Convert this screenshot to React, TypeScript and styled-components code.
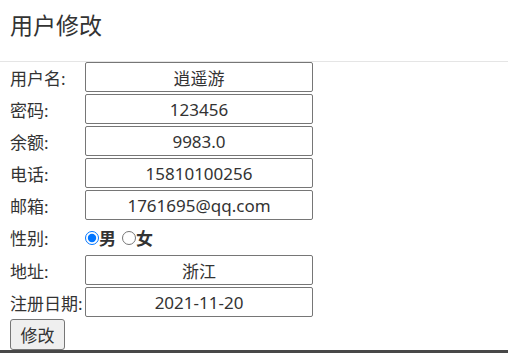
import React from "react";
import styled, { createGlobalStyle } from "styled-components";

const GlobalStyle = createGlobalStyle`
  html, body {
    margin: 0;
    padding: 0;
    background: #ffffff;
  }
  body {
    font-family: "Noto Sans", "Noto Sans CJK SC", sans-serif;
    color: #333333;
  }
`;

const Page = styled.div`
  width: 508px;
  height: 353px;
  display: flex;
  flex-direction: column;
  overflow: hidden;
`;

const Header = styled.div`
  height: 62px;
  box-sizing: border-box;
  padding: 10px 0 0 10px;
  border-bottom: 1px solid #e5e5e5;
  font-family: "Noto Sans", "Noto Sans CJK SC", sans-serif;
  font-size: 23px;
  line-height: 30px;
  color: #333333;
  flex: none;
`;

const Form = styled.form`
  display: grid;
  grid-template-columns: 75px 228px;
  row-gap: 2px;
  padding-left: 10px;
  margin: 0;
`;

const Label = styled.label<{ $h?: number }>`
  height: ${(p) => p.$h ?? 30}px;
  display: flex;
  align-items: center;
  font-size: 17px;
  white-space: nowrap;
  color: #333333;
`;

const Field = styled.input`
  box-sizing: border-box;
  width: 228px;
  height: 30px;
  margin: 0;
  padding: 0;
  border: 1px solid #767676;
  border-radius: 2px;
  text-align: center;
  font-family: "Noto Sans", "Noto Sans CJK SC", sans-serif;
  font-size: 17px;
  color: #333333;
  background: #ffffff;
  outline: none;
`;

const RadioGroup = styled.div`
  height: 31px;
  display: flex;
  align-items: center;
`;

const Radio = styled.input<{ $first?: boolean }>`
  width: 14px;
  height: 14px;
  margin: 0 0 0 ${(p) => (p.$first ? 0 : 6)}px;
`;

const RadioText = styled.span`
  font-weight: bold;
  font-size: 17px;
  color: #333333;
`;

const ButtonRow = styled.div`
  padding-left: 10px;
  margin-top: 2px;
  display: flex;
`;

const SubmitButton = styled.button`
  width: 55px;
  height: 31px;
  box-sizing: border-box;
  padding: 0;
  border: 1px solid #767676;
  border-radius: 3px;
  background: #efefef;
  font-family: "Noto Sans", "Noto Sans CJK SC", sans-serif;
  font-size: 17px;
  color: #333333;
`;

const BottomBar = styled.div`
  height: 3px;
  background: #484848;
  flex: none;
`;

const fields: { label: string; value: string }[] = [
  { label: "用户名:", value: "逍遥游" },
  { label: "密码:", value: "123456" },
  { label: "余额:", value: "9983.0" },
  { label: "电话:", value: "15810100256" },
  { label: "邮箱:", value: "1761695@qq.com" },
];

const tail: { label: string; value: string }[] = [
  { label: "地址:", value: "浙江" },
  { label: "注册日期:", value: "2021-11-20" },
];

export default function App() {
  return (
    <>
      <GlobalStyle />
      <Page>
        <Header>用户修改</Header>
        <Form onSubmit={(e) => e.preventDefault()}>
          {fields.map((f) => (
            <React.Fragment key={f.label}>
              <Label>{f.label}</Label>
              <Field defaultValue={f.value} />
            </React.Fragment>
          ))}
          <Label $h={31}>性别:</Label>
          <RadioGroup>
            <Radio $first type="radio" name="sex" defaultChecked />
            <RadioText>男</RadioText>
            <Radio type="radio" name="sex" />
            <RadioText>女</RadioText>
          </RadioGroup>
          {tail.map((f) => (
            <React.Fragment key={f.label}>
              <Label>{f.label}</Label>
              <Field defaultValue={f.value} />
            </React.Fragment>
          ))}
        </Form>
        <ButtonRow>
          <SubmitButton type="button">修改</SubmitButton>
        </ButtonRow>
        <BottomBar />
      </Page>
    </>
  );
}
